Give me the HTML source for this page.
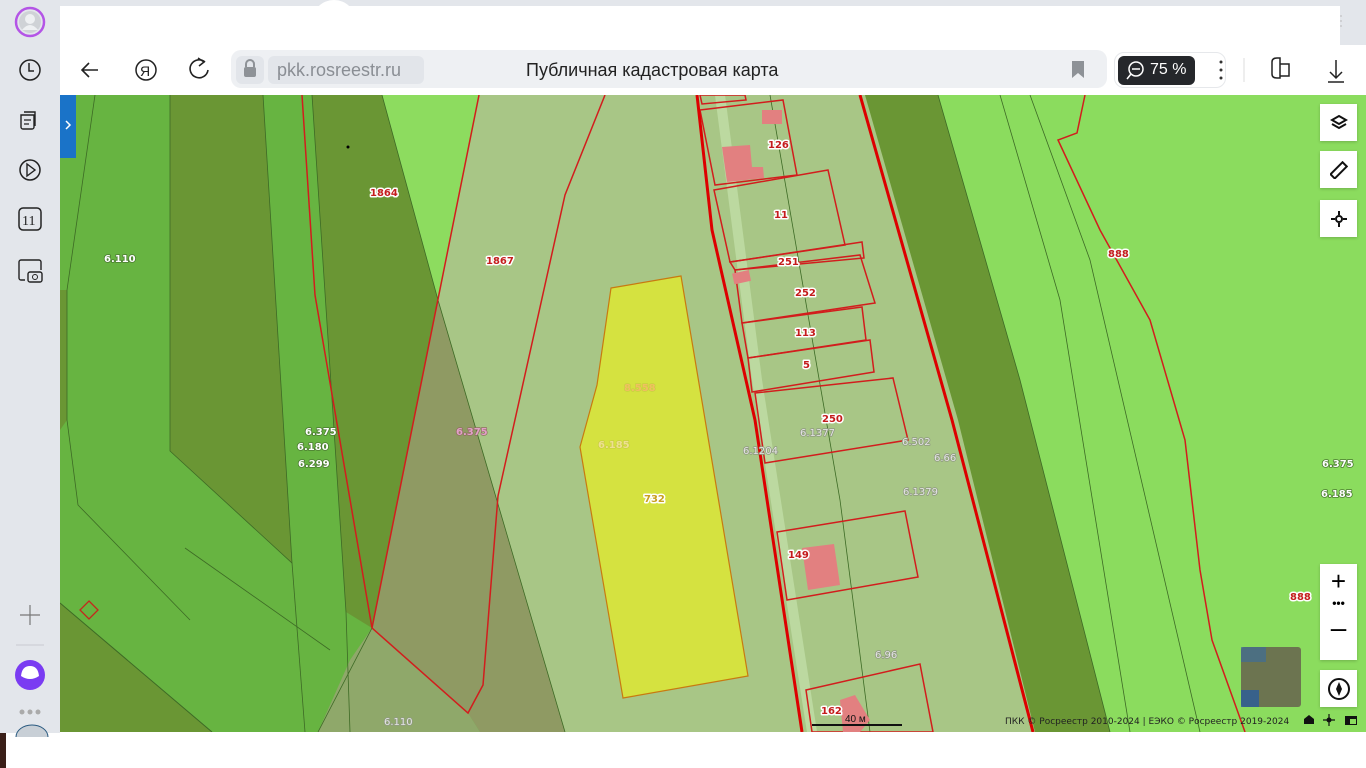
<!DOCTYPE html>
<html><head><meta charset="utf-8"><style>
*{margin:0;padding:0;box-sizing:border-box}
body{width:1366px;height:768px;overflow:hidden;background:#fff;font-family:"Liberation Sans",sans-serif;position:relative}
.side{position:absolute;left:0;top:0;width:60px;height:733px;background:#e3e6eb}
.top{position:absolute;left:0;top:0;width:1366px;height:45px;background:#e3e6eb}
.tab{position:absolute;left:55px;top:6px;width:1285px;height:39px;background:#fff}
.tbar{position:absolute;left:60px;top:45px;width:1306px;height:50px;background:#fff;border-radius:12px 0 0 0}
.url{position:absolute;left:231px;top:50px;width:876px;height:38px;background:#eef0f3;border-radius:10px}
.ctl{position:absolute;left:1320px;width:37px;height:37px;background:#fff;display:flex;align-items:center;justify-content:center;box-shadow:0 1px 3px rgba(0,0,0,.2)}
.lbl text{font-family:"DejaVu Sans",sans-serif;font-size:10px;font-weight:bold;paint-order:stroke;stroke-linejoin:round}
.r{fill:#c41c1c;stroke:#fff;stroke-width:3px}
.w{fill:#fff;stroke:#4a7a30;stroke-width:1.6px}
.g{fill:#e4e4e4;stroke:#8f9a80;stroke-width:1.6px;font-weight:normal!important}
</style></head><body>
<div class="top"></div>
<div class="tab"></div>
<div style="position:absolute;left:312px;top:0;width:44px;height:30px;background:#fff;border-radius:22px 22px 0 0"></div>
<div class="side"></div>
<div class="tbar"></div>
<div class="url"></div>
<div style="position:absolute;left:268px;top:56px;width:156px;height:28px;background:#e2e5ea;border-radius:6px"></div>
<div style="position:absolute;left:236px;top:56px;width:28px;height:28px;background:#e2e5ea;border-radius:6px"></div>
<div style="position:absolute;left:277px;top:60px;font-size:18px;color:#8a8e94">pkk.rosreestr.ru</div>
<div style="position:absolute;left:526px;top:60px;font-size:18px;color:#222">Публичная кадастровая карта</div>
<div style="position:absolute;left:1118px;top:56px;width:77px;height:29px;background:#25272b;border-radius:6px;color:#fff;font-size:16px;padding:5px 0 0 32px">75 %</div>
<div style="position:absolute;left:1114px;top:52px;width:112px;height:36px;border:1px solid #e6e8eb;border-radius:10px"></div>
<svg style="position:absolute;left:0;top:0" width="1366" height="100">
<circle cx="30" cy="22" r="14" fill="none" stroke="#b455e6" stroke-width="2.5"/>
<circle cx="30" cy="22" r="11" fill="#cfd2d6"/><circle cx="30" cy="19" r="5" fill="#eef0f2"/><path d="M22 30 q8 -10 16 0" fill="#eef0f2"/>
<circle cx="30" cy="70" r="10" fill="none" stroke="#222" stroke-width="1.5"/><path d="M29 63v8h5" fill="none" stroke="#222" stroke-width="1.5"/>
<path d="M98 70h-16M89 63l-7 7 7 7" fill="none" stroke="#222" stroke-width="1.6"/>
<circle cx="146" cy="70" r="10" fill="none" stroke="#222" stroke-width="1.5"/><text x="140" y="76" font-size="14" fill="#222">Я</text>
<path d="M205 62a9 9 0 1 0 3 8" fill="none" stroke="#222" stroke-width="1.6"/><path d="M198 58l6 4-5 4" fill="none" stroke="#222" stroke-width="1.5"/>
<rect x="244" y="67" width="12" height="10" rx="2" fill="#8e9297"/><path d="M246 67v-3a4 4 0 0 1 8 0v3" fill="none" stroke="#8e9297" stroke-width="2"/>
<path d="M1072 61h12v17l-6-5-6 5z" fill="#8e9297"/>
<circle cx="1136" cy="69" r="7" fill="none" stroke="#fff" stroke-width="1.5"/><path d="M1132 69h8M1131 74l-4 5" stroke="#fff" stroke-width="1.5"/>
<circle cx="1221" cy="62" r="1.5" fill="#333"/><circle cx="1221" cy="70" r="1.5" fill="#333"/><circle cx="1221" cy="78" r="1.5" fill="#333"/>
<path d="M1244 58v24" stroke="#ddd"/>
<path d="M1272 62q0-4 5-4 h3 v20 h-3 q-5 0-5-4z M1280 64h9v12h-9" fill="none" stroke="#222" stroke-width="1.5"/>
<path d="M1336 60v18M1330 72l6 6 6-6M1328 82h16" fill="none" stroke="#222" stroke-width="1.5"/>
<path d="M1341 15v14" stroke="#bbb" stroke-dasharray="2 3"/>
</svg>
<svg style="position:absolute;left:60px;top:95px" width="1306" height="637" viewBox="60 95 1306 637">
<rect x="60" y="95" width="1306" height="637" fill="#8bdc5e"/>
<polygon points="60,95 440,95 480,732 60,732" fill="#67b441"/>
<polygon points="60,603 212,732 60,732" fill="#6a9634"/>
<path d="M60,603 L212,732" stroke="#3d6a25" stroke-width="1"/>
<polygon points="60,290 67,290 67,420 60,430" fill="#6a9634"/>
<polygon points="170,95 263,95 292,563 170,451" fill="#6a9634"/>
<polygon points="312,95 382,95 438,300 372,628 346,612" fill="#6a9634"/>
<polygon points="382,95 480,95 438,300" fill="#8ddc5f"/>
<polygon points="480,95 870,95 960,420 1040,732 565,732 438,300" fill="#a8c686"/>
<polygon points="438,300 565,732 480,732 468,713 372,628" fill="#8f9a63"/>
<polygon points="372,628 468,713 480,732 318,732 350,660" fill="#8fa86a"/>
<polygon points="865,95 938,95 1020,380 1110,732 1035,732 958,420" fill="#6a9634"/>
<path d="M720,95 L757,380 L812,732" stroke="#bcd9a0" stroke-width="10" fill="none"/>
<g fill="none" stroke="#3d6a25" stroke-width="0.8">
<path d="M95,95 L67,290 L67,420 L78,505 L190,620"/><path d="M170,95 L170,451 L292,563 L263,95"/>
<path d="M185,548 L330,650"/><path d="M292,563 L305,732"/><path d="M312,95 L346,612 L350,732"/>
<path d="M382,95 L438,300 L565,732"/><path d="M938,95 L1020,380 L1110,732"/>
<path d="M1000,95 L1060,300 L1130,732"/><path d="M1030,95 L1090,260 L1200,732"/>
<path d="M770,95 L840,500 L870,732"/><path d="M372,628 L318,732"/>
</g>
<g fill="none" stroke="#d21d1d" stroke-width="1.5">
<path d="M302,95 L315,295 L372,628 L479,95"/>
<path d="M372,628 L468,713 L483,685 L498,496 L565,195 L605,95"/>
<path d="M1085,95 L1077,133 L1058,140 L1100,230 L1150,320 L1185,440 L1200,570 L1212,640 L1245,732"/>
<polygon points="700,110 783,100 797,175 715,185"/>
<polygon points="714,190 828,170 845,245 730,262"/>
<polygon points="730,262 862,242 864,258 735,270"/>
<polygon points="735,270 860,255 875,303 742,323"/>
<polygon points="742,323 862,307 866,340 748,358"/>
<polygon points="748,358 870,340 874,372 752,392"/>
<polygon points="755,393 893,378 908,440 765,463"/>
<polygon points="777,532 905,511 918,577 787,600"/>
<polygon points="806,690 920,664 933,732 812,732"/>
<polygon points="700,95 745,95 746,100 702,104"/>
</g>
<g fill="none" stroke="#d00" stroke-width="3">
<path d="M697,95 L712,230 L755,420 L802,732"/>
<path d="M860,95 L952,420 L1033,732"/>
</g>
<polygon points="611,288 681,276 748,676 623,698 580,447 597,385" fill="#d5e240" stroke="#c87a10" stroke-width="1.2"/>
<g fill="#e28080">
<rect x="762" y="110" width="20" height="14"/>
<polygon points="722,147 750,145 752,167 763,167 764,178 727,182"/>
<rect x="733" y="272" width="17" height="11" transform="rotate(-12 740 277)"/>
<polygon points="802,548 834,544 840,585 808,590"/>
<polygon points="840,700 855,695 870,720 860,732 843,732"/>
</g>
<rect x="60" y="95" width="16" height="63" fill="#1a73c8"/>
<path d="M66,121 l4,4 -4,4" stroke="#fff" stroke-width="1.5" fill="none"/>
<circle cx="348" cy="147" r="1.5" fill="#000"/>
<polygon points="89,601 98,610 89,619 80,610" fill="none" stroke="#c4281c" stroke-width="1.3"/>
<g class="lbl">
<text x="104" y="262" class="w">6.110</text>
<text x="370" y="196" class="r">1864</text>
<text x="486" y="264" class="r">1867</text>
<text x="305" y="435" class="w">6.375</text>
<text x="297" y="450" class="w">6.180</text>
<text x="298" y="467" class="w">6.299</text>
<text x="456" y="435" style="fill:#e2a0c8;stroke:#8e7060;stroke-width:1.4px">6.375</text>
<text x="624" y="391" style="fill:#f0c060;stroke:#c8cf40;stroke-width:1.4px">8.558</text>
<text x="598" y="448" style="fill:#eee090;stroke:#c8cf40;stroke-width:1.4px">6.185</text>
<text x="644" y="502" style="fill:#c8a020;stroke:#fff;stroke-width:3px">732</text>
<text x="384" y="725" class="g">6.110</text>
<text x="768" y="148" class="r">126</text>
<text x="774" y="218" class="r">11</text>
<text x="778" y="265" class="r">251</text>
<text x="795" y="296" class="r">252</text>
<text x="795" y="336" class="r">113</text>
<text x="803" y="368" class="r">5</text>
<text x="822" y="422" class="r">250</text>
<text x="800" y="436" class="g">6.1377</text>
<text x="743" y="454" class="g">6.1204</text>
<text x="902" y="445" class="g">6.502</text>
<text x="934" y="461" class="g">6.66</text>
<text x="903" y="495" class="g">6.1379</text>
<text x="788" y="558" class="r">149</text>
<text x="875" y="658" class="g">6.96</text>
<text x="821" y="714" class="r">162</text>
<text x="1108" y="257" class="r">888</text>
<text x="1290" y="600" class="r">888</text>
<text x="1322" y="467" class="w">6.375</text>
<text x="1321" y="497" class="w">6.185</text>
</g>
<rect x="1241" y="647" width="60" height="60" rx="3" fill="#6c7450"/>
<rect x="1241" y="647" width="25" height="15" fill="#3e6e95" opacity=".7"/>
<rect x="1241" y="690" width="18" height="17" fill="#2c5d9a" opacity=".8"/>
<path d="M812,725 H902" stroke="#111" stroke-width="2"/>
<text x="845" y="722" font-size="10" fill="#111">40 м</text>
<text x="1005" y="724" font-size="9" fill="#222" font-family="DejaVu Sans">ПКК © Росреестр 2010-2024 | ЕЭКО © Росреестр 2019-2024</text>
<path d="M1304,724 v-5 l5,-4 5,4 v5z" fill="#111"/>
<circle cx="1329" cy="720" r="2.5" fill="#111"/><path d="M1323,720h12M1329,714v12" stroke="#111" stroke-width="1.2"/>
<rect x="1345" y="716" width="12" height="9" fill="#111"/><rect x="1350" y="719" width="6" height="5" fill="#8bdc5e"/>
</svg>
<div class="ctl" style="top:104px"><svg width="18" height="18"><path d="M9 2l7 4-7 4-7-4z M2 10l7 4 7-4" fill="none" stroke="#111" stroke-width="2"/></svg></div>
<div class="ctl" style="top:151px"><svg width="18" height="18"><rect x="6" y="1" width="6" height="17" transform="rotate(45 9 9)" fill="none" stroke="#111" stroke-width="2"/></svg></div>
<div class="ctl" style="top:200px"><svg width="18" height="18"><circle cx="9" cy="9" r="3" fill="none" stroke="#111" stroke-width="2"/><path d="M9 1v4M9 13v4M1 9h4M13 9h4" stroke="#111" stroke-width="2"/></svg></div>
<div class="ctl" style="top:564px;height:96px;display:block">
<div style="font-size:26px;text-align:center;line-height:34px">+</div>
<div style="font-size:12px;text-align:center;line-height:10px;font-weight:bold">•••</div>
<div style="font-size:28px;text-align:center;line-height:40px">–</div></div>
<div class="ctl" style="top:670px"><svg width="24" height="24"><circle cx="12" cy="12" r="10" fill="none" stroke="#111" stroke-width="2"/><path d="M12 5l3 7-3 7-3-7z" fill="#111"/></svg></div>
<svg style="position:absolute;left:0;top:100px" width="60" height="640">
<path d="M21 15h13v12a2 2 0 0 1-2 2h-9a2 2 0 0 1-2-2zM24 12h11v14" fill="none" stroke="#222" stroke-width="1.4"/><path d="M24 20h7M24 24h5" stroke="#222" stroke-width="1.3"/>
<circle cx="30" cy="70" r="10" fill="none" stroke="#222" stroke-width="1.5"/><path d="M27 64v12l8-6z" fill="none" stroke="#222" stroke-width="1.4"/>
<rect x="19" y="108" width="22" height="22" rx="4" fill="none" stroke="#222" stroke-width="1.5"/><text x="22" y="125" font-size="14" fill="#222" font-family="Liberation Serif">11</text>
<path d="M25 180h-4a2 2 0 0 1-2-2v-16a2 2 0 0 1 2-2h18a2 2 0 0 1 2 2v8" fill="none" stroke="#222" stroke-width="1.4"/><rect x="28" y="172" width="14" height="10" rx="2" fill="none" stroke="#222" stroke-width="1.4"/><circle cx="35" cy="177" r="2.5" fill="none" stroke="#222"/>
<path d="M30 505v20M20 515h20" stroke="#777" stroke-width="1.2"/>
<path d="M16 545h28" stroke="#c8cbd0"/>
<circle cx="30" cy="575" r="15" fill="#7a3cf2"/><path d="M30 566 q8 0 9 10 q-9 6 -18 0 q1-10 9-10z" fill="#fff"/>
<circle cx="22" cy="612" r="2.5" fill="#aaa"/><circle cx="30" cy="612" r="2.5" fill="#aaa"/><circle cx="38" cy="612" r="2.5" fill="#aaa"/>
<path d="M16 637 a16 12 0 0 1 32 0" fill="#c8cfd6" stroke="#2a5a80"/>
</svg>
<div style="position:absolute;left:0;top:733px;width:6px;height:35px;background:#3a1f18"></div>
</body></html>
